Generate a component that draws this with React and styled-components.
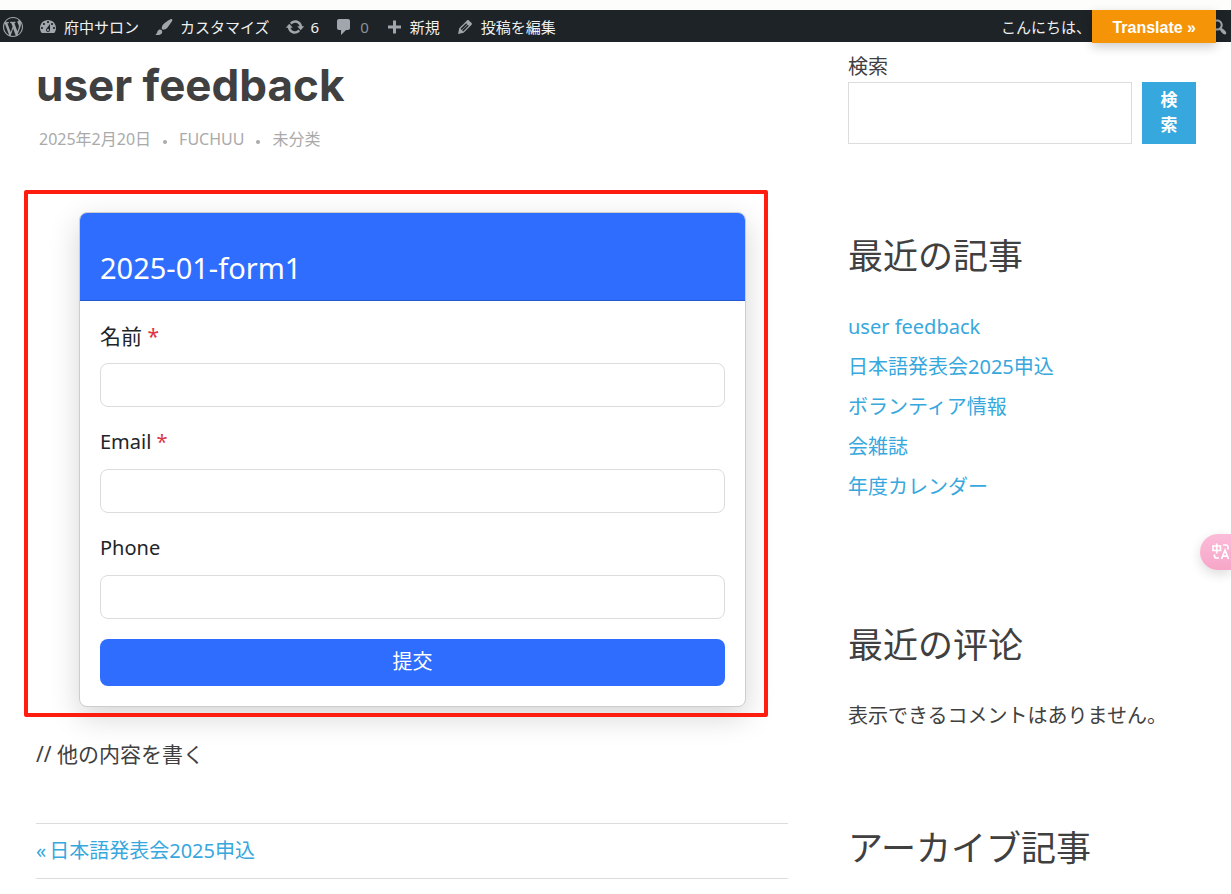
import React from "react";
import styled, { createGlobalStyle } from "styled-components";

const sans = '"Noto Sans", "Noto Sans CJK JP", "Noto Sans CJK SC", sans-serif';

const GlobalStyle = createGlobalStyle`
  *, *::before, *::after { box-sizing: border-box; }
  body {
    margin: 0;
    background: #fff;
    color: #404040;
    font-family: ${sans};
    font-size: 20px;
    overflow-x: hidden;
  }
  a { color: #37a8dd; text-decoration: none; }
  button, input { font: inherit; }
`;

const Page = styled.div`
  position: relative;
  padding-top: 10px;
  background: linear-gradient(#fdfdfb 10px, #fff 10px);
`;

const AdminBar = styled.nav`
  display: flex;
  align-items: center;
  height: 32px;
  padding: 2px 2px 0 3px;
  background: #1d2327;
  font-size: 15px;
  line-height: 30px;
  white-space: nowrap;
`;

const AdminItem = styled.a`
  display: flex;
  align-items: center;
  gap: ${(p) => p.$gap ?? 6}px;
  margin-right: ${(p) => p.$after ?? 15}px;
  color: ${(p) => (p.$dim ? "#8c9196" : "#f0f0f1")};
`;

const AdminEnd = styled.div`
  display: flex;
  align-items: center;
  margin-left: auto;
`;

const Glyph = styled.svg`
  display: block;
  flex: none;
  width: 20px;
  height: 20px;
  fill: #a0a6ab;
`;

const TranslateButton = styled.button`
  position: absolute;
  top: 10px;
  right: 15px;
  padding: 2px 20px 0;
  height: 33px;
  border: 0;
  background: #f59406;
  color: #fff;
  font: bold 16px/31px "Liberation Sans", Arial, sans-serif;
  box-shadow: 0 4px 10px rgba(0, 0, 0, 0.2);
`;

const Columns = styled.div`
  display: grid;
  grid-template-columns: minmax(0, 1fr) 348px;
  gap: 60px;
  padding: 0 35px 0 36px;
`;

const Main = styled.main`
  padding-top: 15px;
`;

const Title = styled.h1`
  margin: 0;
  font: bold 44px/56px Inter, sans-serif;
`;

const Meta = styled.div`
  display: flex;
  gap: 12px;
  margin-top: 14px;
  padding-left: 3px;
  color: #aaa;
  font-size: 16px;
  line-height: 24px;
  a { color: inherit; }
`;

const Dot = styled.span`
  align-self: center;
  width: 4px;
  height: 4px;
  margin-top: 6px;
  border-radius: 50%;
  background: #aaa;
`;

const Frame = styled.section`
  position: relative;
  margin: 39px 20px 20px -12px;
  padding: 22px 22px 10px 55px;

  &::after {
    content: "";
    position: absolute;
    inset: 0;
    border: 4px solid #ff1d10;
    border-radius: 2px;
    pointer-events: none;
  }
`;

const Card = styled.form`
  border: 1px solid #cdcdcd;
  border-radius: 8px;
  background: #fff;
  box-shadow: 0 10px 30px rgba(0, 0, 0, 0.17);
`;

const CardHeader = styled.h2`
  margin: 0;
  padding: 32px 20px 10px;
  border-bottom: 1px solid #2459cf;
  border-radius: 7px 7px 0 0;
  background: #2f6dfe;
  color: #fff;
  font-size: 29px;
  font-weight: 400;
  line-height: 45px;
`;

const CardBody = styled.div`
  display: flex;
  flex-direction: column;
  gap: 20px;
  padding: 18px 20px 20px;
`;

const Field = styled.div`
  display: flex;
  flex-direction: column;
  gap: 10px;
  & + & { margin-top: -2px; }
  label {
    color: #212529;
    font-size: ${(p) => (p.$large ? 21 : 20)}px;
    line-height: 34px;
  }
  input {
    width: 100%;
    height: 44px;
    padding: 6px 12px;
    border: 1px solid #dcdcdc;
    border-radius: 8px;
    background: #fff;
  }
`;

const Required = styled.span`
  color: #dc3545;
`;

const Submit = styled.button`
  height: 47px;
  padding: 0 0 4px;
  border: 0;
  border-radius: 8px;
  background: #2f6dfe;
  color: #fff;
`;

const Paragraph = styled.p`
  margin: 0;
  font-size: ${(p) => (p.$large ? 21 : 20)}px;
  line-height: ${(p) => (p.$large ? 34 : 40)}px;
`;

const PostNav = styled.nav`
  margin-top: 52px;
  border: solid #dcdcdc;
  border-width: 1px 0;
  line-height: 54px;
  a { display: flex; gap: 3px; }
`;

const Sidebar = styled.aside`
  display: flex;
  flex-direction: column;
  gap: 87px;
  padding-top: 9px;
`;

const SearchForm = styled.form`
  label { display: block; line-height: 31px; }
`;

const SearchRow = styled.div`
  display: flex;
  gap: 10px;
  input {
    flex: 1;
    min-width: 0;
    padding: 8px;
    border: 1px solid #dcdcdc;
    background: #fff;
  }
  button {
    width: 54px;
    padding: 5px 18px 7px;
    border: 0;
    background: #37a8dd;
    color: #fff;
    font-size: 17px;
    font-weight: 700;
    line-height: 25px;
  }
`;

const WidgetTitle = styled.h2`
  margin: 0 0 26px;
  font-size: 35px;
  font-weight: 400;
  line-height: 50px;
`;

const LinkList = styled.ul`
  margin: 0 0 26px;
  padding: 0;
  list-style: none;
  line-height: 40px;
`;

const TranslateTab = styled.button`
  position: absolute;
  top: 534px;
  right: 0;
  width: 31px;
  height: 36px;
  padding: 0 0 0 12px;
  border: 0;
  border-radius: 18px 0 0 18px;
  background: linear-gradient(#fbbcd8, #f7a6c8);
  box-shadow: 0 4px 12px rgba(0, 0, 0, 0.14);
  overflow: hidden;
  svg { display: block; }
`;

const paths = {
  wordpress:
    "M20 10c0-5.51-4.49-10-10-10C4.48 0 0 4.49 0 10c0 5.52 4.48 10 10 10 5.51 0 10-4.48 10-10zM7.78 15.37L4.37 6.22c.55-.02 1.17-.08 1.17-.08.5-.06.44-1.13-.06-1.11 0 0-1.45.11-2.37.11-.18 0-.37 0-.58-.01C4.12 2.69 6.87 1.11 10 1.11c2.33 0 4.45.87 6.05 2.34-.68-.11-1.65.39-1.65 1.58 0 .74.45 1.36.9 2.1.35.61.55 1.36.55 2.46 0 1.49-1.4 5-1.4 5l-3.03-8.37c.54-.02.82-.17.82-.17.5-.05.44-1.25-.06-1.22 0 0-1.44.12-2.38.12-.87 0-2.33-.12-2.33-.12-.5-.03-.56 1.2-.06 1.22l.92.08 1.26 3.41zM17.41 10c.24-.64.74-1.87.43-4.25.7 1.29 1.05 2.71 1.05 4.25 0 3.29-1.73 6.24-4.4 7.78.97-2.59 1.94-5.2 2.92-7.78zM6.1 18.09C3.12 16.65 1.11 13.53 1.11 10c0-1.3.23-2.48.72-3.59C3.25 10.3 4.67 14.2 6.1 18.09zm4.03-6.63l2.58 6.98c-.86.29-1.76.45-2.71.45-.79 0-1.57-.11-2.29-.33.81-2.38 1.62-4.74 2.42-7.1z",
  dashboard:
    "M3.76 16h12.48c1.1-1.37 1.76-3.11 1.76-5 0-4.42-3.58-8-8-8s-8 3.58-8 8c0 1.89.66 3.63 1.76 5zM10 4c.55 0 1 .45 1 1s-.45 1-1 1-1-.45-1-1 .45-1 1-1zM6 6c.55 0 1 .45 1 1s-.45 1-1 1-1-.45-1-1 .45-1 1-1zm8 0c.55 0 1 .45 1 1s-.45 1-1 1-1-.45-1-1 .45-1 1-1zm-5.37 5.55L12 7v6c0 1.1-.9 2-2 2s-2-.9-2-2c0-.57.24-1.08.63-1.45zM4 10c.55 0 1 .45 1 1s-.45 1-1 1-1-.45-1-1 .45-1 1-1zm12 0c.55 0 1 .45 1 1s-.45 1-1 1-1-.45-1-1 .45-1 1-1zm-5 3c0-.55-.45-1-1-1s-1 .45-1 1 .45 1 1 1 1-.45 1-1z",
  brush:
    "M18.33 3.57s.27-.8-.31-1.36c-.53-.52-1.22-.24-1.22-.24-.61.3-5.76 3.47-7.67 5.57-.86.96-2.06 3.79-1.09 4.82.92.98 3.96-.17 4.79-1 2.06-2.06 5.21-7.17 5.5-7.79zM1.4 17.65c2.37-1.56 1.46-3.41 3.23-4.64.93-.65 2.22-.62 3.08.29.63.67.8 2.57-.16 3.46-1.57 1.45-4 1.55-6.15.89z",
  update:
    "M10.2 3.28c3.53 0 6.43 2.61 6.92 6h2.08l-3.5 4-3.5-4h2.32c-.45-1.97-2.21-3.45-4.32-3.45-1.45 0-2.73.71-3.54 1.78L4.95 5.66C6.23 4.2 8.11 3.28 10.2 3.28zm-.4 13.44c-3.52 0-6.43-2.61-6.92-6H.8l3.5-4c1.17 1.33 2.33 2.67 3.5 4H5.48c.45 1.97 2.21 3.45 4.32 3.45 1.45 0 2.73-.71 3.54-1.78l1.71 1.95c-1.28 1.46-3.15 2.38-5.25 2.38z",
  comment:
    "M5 2h9c1.1 0 2 .9 2 2v7c0 1.1-.9 2-2 2h-2l-5 5v-5H5c-1.1 0-2-.9-2-2V4c0-1.1.9-2 2-2z",
  plus: "M17 8.5v3h-5v5H9v-5H4v-3h5v-5h3v5h5z",
  pencil:
    "M13.89 3.39l2.71 2.72c.46.46.42 1.24.03 1.64l-8.01 8.02-5.56 1.16 1.16-5.58s7.6-7.63 7.99-8.03c.39-.39 1.22-.39 1.68.07zm-2.73 2.79l-5.59 5.61 1.11 1.11 5.54-5.65zm-2.97 8.23l5.58-5.6-1.07-1.08-5.59 5.6z",
  search:
    "M12.14 4.18c1.87 1.87 2.11 4.75.72 6.89.12.1.22.21.36.31.2.16.47.36.81.59.34.24.56.39.66.47.42.31.73.57.94.78.32.32.6.65.84 1 .25.35.44.69.59 1.04.14.35.21.68.18 1-.02.32-.14.59-.36.81s-.49.34-.81.36c-.31.02-.65-.04-.99-.19-.35-.14-.7-.34-1.04-.59-.35-.24-.68-.52-1-.84-.21-.21-.47-.52-.77-.93-.1-.13-.25-.35-.47-.66-.22-.32-.4-.57-.56-.78-.16-.2-.29-.35-.44-.5-2.07 1.09-4.69.76-6.44-.98-2.14-2.15-2.14-5.64 0-7.78 2.15-2.15 5.63-2.15 7.78 0zm-1.41 6.36c1.36-1.37 1.36-3.58 0-4.95-1.37-1.37-3.59-1.37-4.95 0-1.37 1.37-1.37 3.58 0 4.95 1.36 1.37 3.58 1.37 4.95 0z",
};

function Icon({ name }) {
  return (
    <Glyph viewBox="0 0 20 20" aria-hidden="true">
      <path fillRule="evenodd" d={paths[name]} />
    </Glyph>
  );
}

const fields = [
  { id: "name", label: "名前", required: true, large: true },
  { id: "email", label: "Email", required: true },
  { id: "phone", label: "Phone" },
];

const recent = [
  "user feedback",
  "日本語発表会2025申込",
  "ボランティア情報",
  "会雑誌",
  "年度カレンダー",
];

export default function App() {
  return (
    <Page lang="ja">
      <GlobalStyle />
      <AdminBar>
        <AdminItem href="#" aria-label="WordPress"><Icon name="wordpress" /></AdminItem>
        <AdminItem href="#"><Icon name="dashboard" />府中サロン</AdminItem>
        <AdminItem href="#"><Icon name="brush" />カスタマイズ</AdminItem>
        <AdminItem href="#"><Icon name="update" />6</AdminItem>
        <AdminItem href="#" $dim><Icon name="comment" />0</AdminItem>
        <AdminItem href="#"><Icon name="plus" />新規</AdminItem>
        <AdminItem href="#"><Icon name="pencil" />投稿を編集</AdminItem>
        <AdminEnd>
          <AdminItem href="#" $after={118}>こんにちは、</AdminItem>
          <AdminItem href="#" $after={0} aria-label="Search"><Icon name="search" /></AdminItem>
        </AdminEnd>
      </AdminBar>
      <TranslateButton type="button">Translate »</TranslateButton>

      <Columns>
        <Main>
          <Title>user feedback</Title>
          <Meta>
            <a href="#">2025年2月20日</a>
            <Dot />
            <a href="#">FUCHUU</a>
            <Dot />
            <a href="#" lang="zh-CN">未分类</a>
          </Meta>
          <Frame>
            <Card onSubmit={(e) => e.preventDefault()}>
              <CardHeader>2025-01-form1</CardHeader>
              <CardBody>
                {fields.map((f) => (
                  <Field key={f.id} $large={f.large}>
                    <label htmlFor={f.id}>
                      {f.label}
                      {f.required && <Required> *</Required>}
                    </label>
                    <input id={f.id} type="text" />
                  </Field>
                ))}
                <Submit type="submit">提交</Submit>
              </CardBody>
            </Card>
          </Frame>
          <Paragraph $large>// 他の内容を書く</Paragraph>
          <PostNav>
            <a href="#"><span>«</span><span>日本語発表会2025申込</span></a>
          </PostNav>
        </Main>

        <Sidebar>
          <SearchForm onSubmit={(e) => e.preventDefault()}>
            <label htmlFor="search">検索</label>
            <SearchRow>
              <input id="search" type="search" />
              <button type="submit">検索</button>
            </SearchRow>
          </SearchForm>
          <section>
            <WidgetTitle>最近の記事</WidgetTitle>
            <LinkList>
              {recent.map((t) => (
                <li key={t}><a href="#">{t}</a></li>
              ))}
            </LinkList>
          </section>
          <section>
            <WidgetTitle>最近の评论</WidgetTitle>
            <Paragraph>表示できるコメントはありません。</Paragraph>
          </section>
          <section>
            <WidgetTitle>アーカイブ記事</WidgetTitle>
          </section>
        </Sidebar>
      </Columns>

      <TranslateTab type="button" aria-label="Translate page">
        <svg width="19" height="18" viewBox="0 0 19 18" fill="none" stroke="#fff" strokeWidth="1.7">
          <path d="M1 3h7.500v4.500h-7.500zM4.750 .5v10M11 2h3q2 0 2 2v2.500M2.500 11.500v1.500q0 2 2 2h2.500M9.500 16l3.500-9 3.500 9M10.800 13.200h4.400" />
        </svg>
      </TranslateTab>
    </Page>
  );
}
